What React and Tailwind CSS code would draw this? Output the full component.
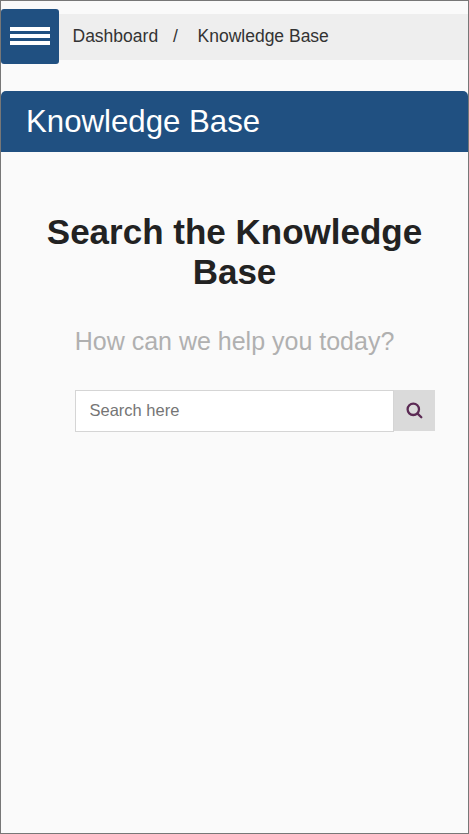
export default function App() {
  return (
    <div className="h-[834px] w-[469px] overflow-hidden border border-[#777] bg-[#fafafa] font-['Liberation_Sans',Arial,sans-serif] text-[#222]">
      <header className="mt-2 flex h-[55px] items-center">
        <button aria-label="Menu" className="flex h-[55px] w-[58px] shrink-0 flex-col items-center justify-center gap-[3px] rounded-[3px] bg-[#205081] pb-0.5">
          <span className="h-1 w-10 bg-white" />
          <span className="h-1 w-10 bg-white" />
          <span className="h-1 w-10 bg-white" />
        </button>
        <nav className="flex h-[46px] flex-1 items-center bg-[#eee] pl-[13.5px] text-[17.5px] text-[#333]">
          <span className="w-[100.5px]">Dashboard</span>
          <span className="w-[24.5px]">/</span>
          <span>Knowledge Base</span>
        </nav>
      </header>
      <h1 className="mt-[27px] flex h-[61px] items-center rounded-t-[5px] bg-[#205081] pt-0.5 pl-[25px] text-[31.2px] text-white">Knowledge Base</h1>
      <main className="pt-[60px] text-center">
        <h2 className="text-[35px] leading-10 font-bold">Search the Knowledge<br />Base</h2>
        <p className="mt-[34px] text-[25px] leading-[30px] text-[#b0b0b0]">How can we help you today?</p>
        <form className="mt-[34px] ml-[74px] flex">
          <input placeholder="Search here" className="h-[42px] w-[319px] border border-[#d5d5d5] bg-white px-[13.5px] pb-0.5 text-[16.5px] placeholder:text-[#757575]" />
          <button type="button" aria-label="Search" className="flex h-[41px] w-[41px] items-center justify-center bg-[#dadada] pr-px text-[#5b2a54]">
            <svg width="17" height="17" viewBox="0 0 17 17" fill="none" stroke="currentColor" strokeWidth="2.3" strokeLinecap="round">
              <circle cx="7.3" cy="7.3" r="5.7" />
              <path d="m11.6 11.6 3.7 3.7" />
            </svg>
          </button>
        </form>
      </main>
    </div>
  );
}
